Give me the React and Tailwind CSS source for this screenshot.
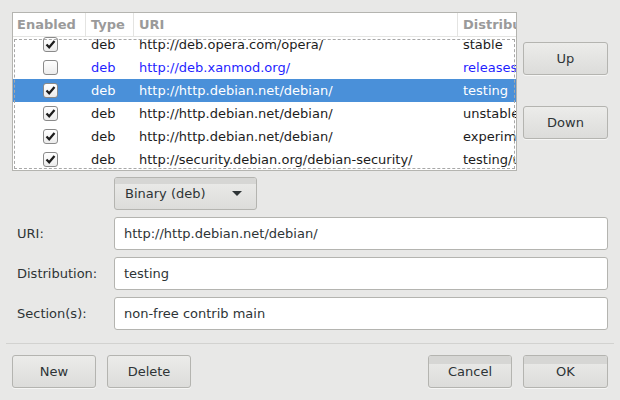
import { useState } from "react";

const rows = [
  { on: true, type: "deb", uri: "http://deb.opera.com/opera/", dist: "stable" },
  { on: false, type: "deb", uri: "http://deb.xanmod.org/", dist: "releases", blue: true },
  { on: true, type: "deb", uri: "http://http.debian.net/debian/", dist: "testing", selected: true },
  { on: true, type: "deb", uri: "http://http.debian.net/debian/", dist: "unstable" },
  { on: true, type: "deb", uri: "http://http.debian.net/debian/", dist: "experimental" },
  { on: true, type: "deb", uri: "http://security.debian.org/debian-security/", dist: "testing/updates" },
];

const CheckBox = ({ checked }) => (
  <div className="w-[15px] h-[15px] rounded-[3px] border border-[#8a8a8a] bg-gradient-to-b from-[#ffffff] to-[#ececec] flex items-center justify-center">
    {checked && (
      <svg width="11" height="11" viewBox="0 0 11 11">
        <path d="M1.5 5.5 L4.2 8.3 L9.5 2" fill="none" stroke="#1c1c1c" strokeWidth="2.2" />
      </svg>
    )}
  </div>
);

const Button = ({ children, className = "", band = false }) => (
  <button
    type="button"
    className={`relative h-[33px] w-[84px] rounded-[3px] border border-[#b4b4b0] bg-gradient-to-b from-[#ececea] to-[#dcdcda] text-[#2e3436] shadow-[0_1px_0_rgba(255,255,255,0.6)] overflow-hidden ${className}`}
  >
    {band && <span className="absolute left-0 right-0 top-0 h-[8px] bg-[#d6d6d4]" />}
    <span className="relative">{children}</span>
  </button>
);

const Field = ({ label, value }) => (
  <div className="flex items-center h-[33px]">
    <div className="w-[97px]">{label}</div>
    <div className="w-[494px] h-[33px] rounded-[3px] border border-[#b4b4b0] bg-white flex items-center pl-[9px]">
      {value}
    </div>
  </div>
);

export default function App() {
  const [selected] = useState(2);

  return (
    <div
      className="w-[620px] h-[400px] bg-[#e8e8e7] text-[13px] text-[#2e3436] overflow-hidden"
      style={{ fontFamily: '"DejaVu Sans", "Liberation Sans", sans-serif' }}
    >
      <div className="pt-[12px] pl-[12px] flex gap-[6px]">
        <div className="relative w-[505px] h-[159px] border border-[#b4b4b0] bg-white flex flex-col overflow-hidden">
          <div className="h-[24px] flex border-b border-[#e4e4e2] font-bold text-[#9a9a9a] shrink-0">
            <div className="w-[73px] pl-[4px] flex items-center border-r border-[#e4e4e2]">Enabled</div>
            <div className="w-[48px] pl-[5px] flex items-center border-r border-[#e4e4e2]">Type</div>
            <div className="w-[324px] pl-[5px] flex items-center border-r border-[#e4e4e2]">URI</div>
            <div className="flex-1 pl-[5px] flex items-center whitespace-nowrap overflow-hidden">Distribution</div>
          </div>
          <div className="flex-1 overflow-hidden">
            <div className="-mt-[4px]">
              {rows.map((r, i) => {
                const sel = i === selected;
                const color = sel ? "text-white" : r.blue ? "text-[#1f1fff]" : "text-[#1c1c1c]";
                return (
                  <div key={i} className={`h-[23px] flex items-center whitespace-nowrap ${sel ? "bg-[#4a90d9]" : ""} ${color}`}>
                    <div className="w-[73px] flex justify-center pl-[2px]">
                      <CheckBox checked={r.on} />
                    </div>
                    <div className="w-[48px] pl-[5px]">{r.type}</div>
                    <div className="w-[324px] pl-[5px]">{r.uri}</div>
                    <div className="flex-1 pl-[5px] overflow-hidden">{r.dist}</div>
                  </div>
                );
              })}
            </div>
          </div>
          <div className="absolute left-[1px] right-[1px] top-[26px] bottom-[1px] border border-dashed border-[#a8a8a8] pointer-events-none" />
        </div>
        <div className="flex flex-col pt-[30px] gap-[31px]">
          <Button className="w-[85px]">Up</Button>
          <Button className="w-[85px]">Down</Button>
        </div>
      </div>

      <div className="ml-[114px] mt-[6px]">
        <button
          type="button"
          className="relative w-[143px] h-[33px] rounded-[3px] border border-[#b4b4b0] bg-gradient-to-b from-[#ececea] to-[#dcdcda] flex items-center justify-between pl-[10px] pr-[14px] overflow-hidden"
        >
          <span className="absolute left-0 right-0 top-0 h-[6px] bg-[#d6d6d4]" />
          <span className="relative">Binary (deb)</span>
          <svg width="10" height="6" viewBox="0 0 10 6" className="relative">
            <path d="M0 0 L10 0 L5 5 Z" fill="#2e3436" />
          </svg>
        </button>
      </div>

      <div className="pl-[17px] mt-[7px] flex flex-col gap-[7px]">
        <Field label="URI:" value="http://http.debian.net/debian/" />
        <Field label="Distribution:" value="testing" />
        <Field label="Section(s):" value="non-free contrib main" />
      </div>

      <div className="mx-[6px] mt-[13px] h-px bg-[#d2d2d0]" />

      <div className="px-[12px] mt-[11px] flex justify-between">
        <div className="flex gap-[11px]">
          <Button>New</Button>
          <Button>Delete</Button>
        </div>
        <div className="flex gap-[11px]">
          <Button band>Cancel</Button>
          <Button band className="w-[85px]">OK</Button>
        </div>
      </div>
    </div>
  );
}
